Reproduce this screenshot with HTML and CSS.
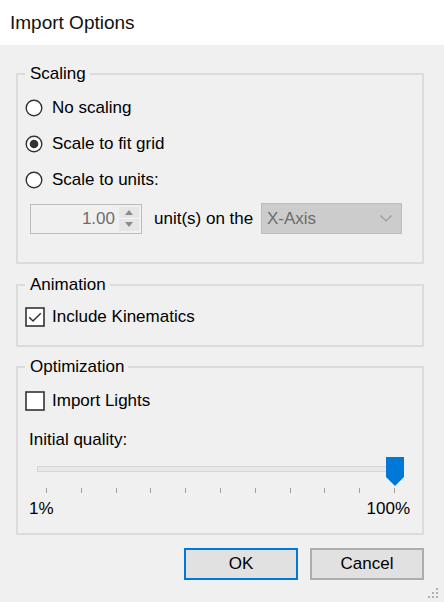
FILE: index.html
```html
<!DOCTYPE html>
<html>
<head>
<meta charset="utf-8">
<title>Import Options</title>
<link rel="stylesheet" href="styles.css">
</head>
<body>
<div class="window">
  <div class="titlebar">Import Options</div>
  <div class="content">
    <fieldset class="group group-scaling">
      <legend>Scaling</legend>
      <div class="option">
        <svg class="radio" width="18" height="18" viewBox="0 0 18 18"><circle cx="9" cy="9" r="7.8" fill="#fff" stroke="#333" stroke-width="1.4"/></svg>
        <span>No scaling</span>
      </div>
      <div class="option">
        <svg class="radio" width="18" height="18" viewBox="0 0 18 18"><circle cx="9" cy="9" r="7.8" fill="#fff" stroke="#333" stroke-width="1.4"/><circle cx="9" cy="9" r="4.3" fill="#333"/></svg>
        <span>Scale to fit grid</span>
      </div>
      <div class="option">
        <svg class="radio" width="18" height="18" viewBox="0 0 18 18"><circle cx="9" cy="9" r="7.8" fill="#fff" stroke="#333" stroke-width="1.4"/></svg>
        <span>Scale to units:</span>
      </div>
      <div class="units-row">
        <div class="spinner">
          <span class="spin-value">1.00</span>
          <span class="spin-buttons">
            <span class="spin-btn"><svg width="8" height="5" viewBox="0 0 8 5"><path d="M0 5 L4 0 L8 5 Z" fill="#8a8a8a"/></svg></span>
            <span class="spin-btn"><svg width="8" height="5" viewBox="0 0 8 5"><path d="M0 0 L4 5 L8 0 Z" fill="#8a8a8a"/></svg></span>
          </span>
        </div>
        <span class="units-label">unit(s) on the</span>
        <div class="select">
          <span class="select-value">X-Axis</span>
          <svg class="chevron" width="12" height="7" viewBox="0 0 12 7"><path d="M0.5 0.5 L6 6 L11.5 0.5" fill="none" stroke="#9a9a9a" stroke-width="1.2"/></svg>
        </div>
      </div>
    </fieldset>

    <fieldset class="group group-animation">
      <legend>Animation</legend>
      <div class="option check-option">
        <svg class="checkbox" width="20" height="20" viewBox="0 0 20 20"><rect x="1" y="1" width="18" height="18" fill="#fff" stroke="#333" stroke-width="1.6"/><path d="M4.2 10.2 L8 14 L15.8 6.2" fill="none" stroke="#333" stroke-width="1.5"/></svg>
        <span>Include Kinematics</span>
      </div>
    </fieldset>

    <fieldset class="group group-optimization">
      <legend>Optimization</legend>
      <div class="option check-option">
        <svg class="checkbox" width="20" height="20" viewBox="0 0 20 20"><rect x="1" y="1" width="18" height="18" fill="#fff" stroke="#333" stroke-width="1.6"/></svg>
        <span>Import Lights</span>
      </div>
      <div class="quality-label">Initial quality:</div>
      <div class="slider">
        <div class="track"></div>
        <svg class="thumb" width="18" height="29" viewBox="0 0 18 29"><path d="M0 0 H18 V20 L9 29 L0 20 Z" fill="#0078d7"/></svg>
        <div class="ticks">
          <span></span><span></span><span></span><span></span><span></span><span></span><span></span><span></span><span></span><span></span><span></span>
        </div>
      </div>
      <div class="slider-labels">
        <span>1%</span>
        <span>100%</span>
      </div>
    </fieldset>

    <div class="buttons">
      <button class="btn btn-default">OK</button>
      <button class="btn">Cancel</button>
    </div>
  </div>
  <svg class="grip" width="12" height="12" viewBox="0 0 12 12">
    <rect x="9" y="1" width="2" height="2" fill="#b0b0b0"/>
    <rect x="5" y="5" width="2" height="2" fill="#b0b0b0"/>
    <rect x="9" y="5" width="2" height="2" fill="#b0b0b0"/>
    <rect x="1" y="9" width="2" height="2" fill="#b0b0b0"/>
    <rect x="5" y="9" width="2" height="2" fill="#b0b0b0"/>
    <rect x="9" y="9" width="2" height="2" fill="#b0b0b0"/>
  </svg>
</div>
</body>
</html>
```

FILE: styles.css
```css
html, body {
  margin: 0;
  padding: 0;
}

body {
  width: 444px;
  height: 602px;
  overflow: hidden;
  background: #f0f0f0;
  font-family: "Liberation Sans", Arial, sans-serif;
  font-size: 17px;
  color: #000;
}

.window {
  position: relative;
  width: 444px;
  height: 602px;
}

.titlebar {
  height: 45px;
  line-height: 45px;
  padding-left: 10px;
  background: #fff;
  font-size: 19px;
  color: #111;
}

.content {
  padding: 19px 20px 0 16px;
}

.group {
  margin: 0;
  min-width: 0;
  border: 2px solid #dcdcdc;
  padding: 0 7px;
}

.group legend {
  padding: 0 4px 0 5px;
  line-height: 20px;
  height: 20px;
}

.group-scaling {
  padding-top: 6px;
  padding-bottom: 28px;
}

.group-animation {
  margin-top: 11px;
  padding-top: 11px;
  padding-bottom: 17px;
}

.group-optimization {
  margin-top: 10px;
  padding-top: 13px;
  padding-bottom: 14px;
}

.option {
  display: flex;
  align-items: center;
  height: 36px;
}

.option .radio {
  flex: none;
  margin-right: 9px;
}

.check-option {
  height: 22px;
}

.option .checkbox {
  flex: none;
  margin-right: 7px;
}

.units-row {
  display: flex;
  align-items: center;
  height: 31px;
  margin-top: 5px;
  margin-left: 5px;
}

.spinner {
  display: flex;
  align-items: stretch;
  box-sizing: border-box;
  width: 112px;
  height: 30px;
  border: 1px solid #bcbcbc;
  background: #f0f0f0;
}

.spin-value {
  flex: 1;
  text-align: right;
  line-height: 28px;
  padding-right: 4px;
  color: #6d6d6d;
}

.spin-buttons {
  display: flex;
  flex-direction: column;
  width: 20px;
  margin: 2px 2px 2px 0;
  background: #e6e6e6;
}

.spin-btn {
  flex: 1;
  display: flex;
  align-items: center;
  justify-content: center;
}

.spin-btn + .spin-btn {
  border-top: 1px solid #f4f4f4;
}

.units-label {
  margin-left: 12px;
  width: 102px;
}

.select {
  display: flex;
  align-items: center;
  justify-content: space-between;
  box-sizing: border-box;
  width: 141px;
  height: 31px;
  margin-left: 5px;
  padding: 0 9px 0 5px;
  border: 1px solid #bdbdbd;
  background: #cccccc;
  color: #6d6d6d;
}

.quality-label {
  margin-top: 18px;
  padding-left: 4px;
  line-height: 20px;
}

.slider {
  position: relative;
  height: 36px;
  margin-top: 7px;
}

.track {
  position: absolute;
  left: 12px;
  right: 12px;
  top: 9px;
  height: 6px;
  box-sizing: border-box;
  border: 1px solid #d6d6d6;
  background: #e7eaea;
}

.thumb {
  position: absolute;
  right: 11px;
  top: 0;
}

.ticks {
  position: absolute;
  left: 21px;
  right: 20px;
  top: 31px;
  height: 5px;
  display: flex;
  justify-content: space-between;
}

.ticks span {
  width: 1px;
  height: 5px;
  background: #a0a0a0;
}

.slider-labels {
  display: flex;
  justify-content: space-between;
  margin-top: 6px;
  padding: 0 5px 0 4px;
  line-height: 20px;
}

.buttons {
  display: flex;
  justify-content: flex-end;
  gap: 12px;
  margin-top: 13px;
  padding-right: 0;
}

.btn {
  box-sizing: border-box;
  width: 114px;
  height: 32px;
  padding: 0;
  border: 2px solid #adadad;
  background: #e1e1e1;
  font-family: inherit;
  font-size: 17px;
  color: #000;
}

.btn-default {
  border-color: #0078d7;
}

.grip {
  position: absolute;
  right: 5px;
  bottom: 3px;
}
```
